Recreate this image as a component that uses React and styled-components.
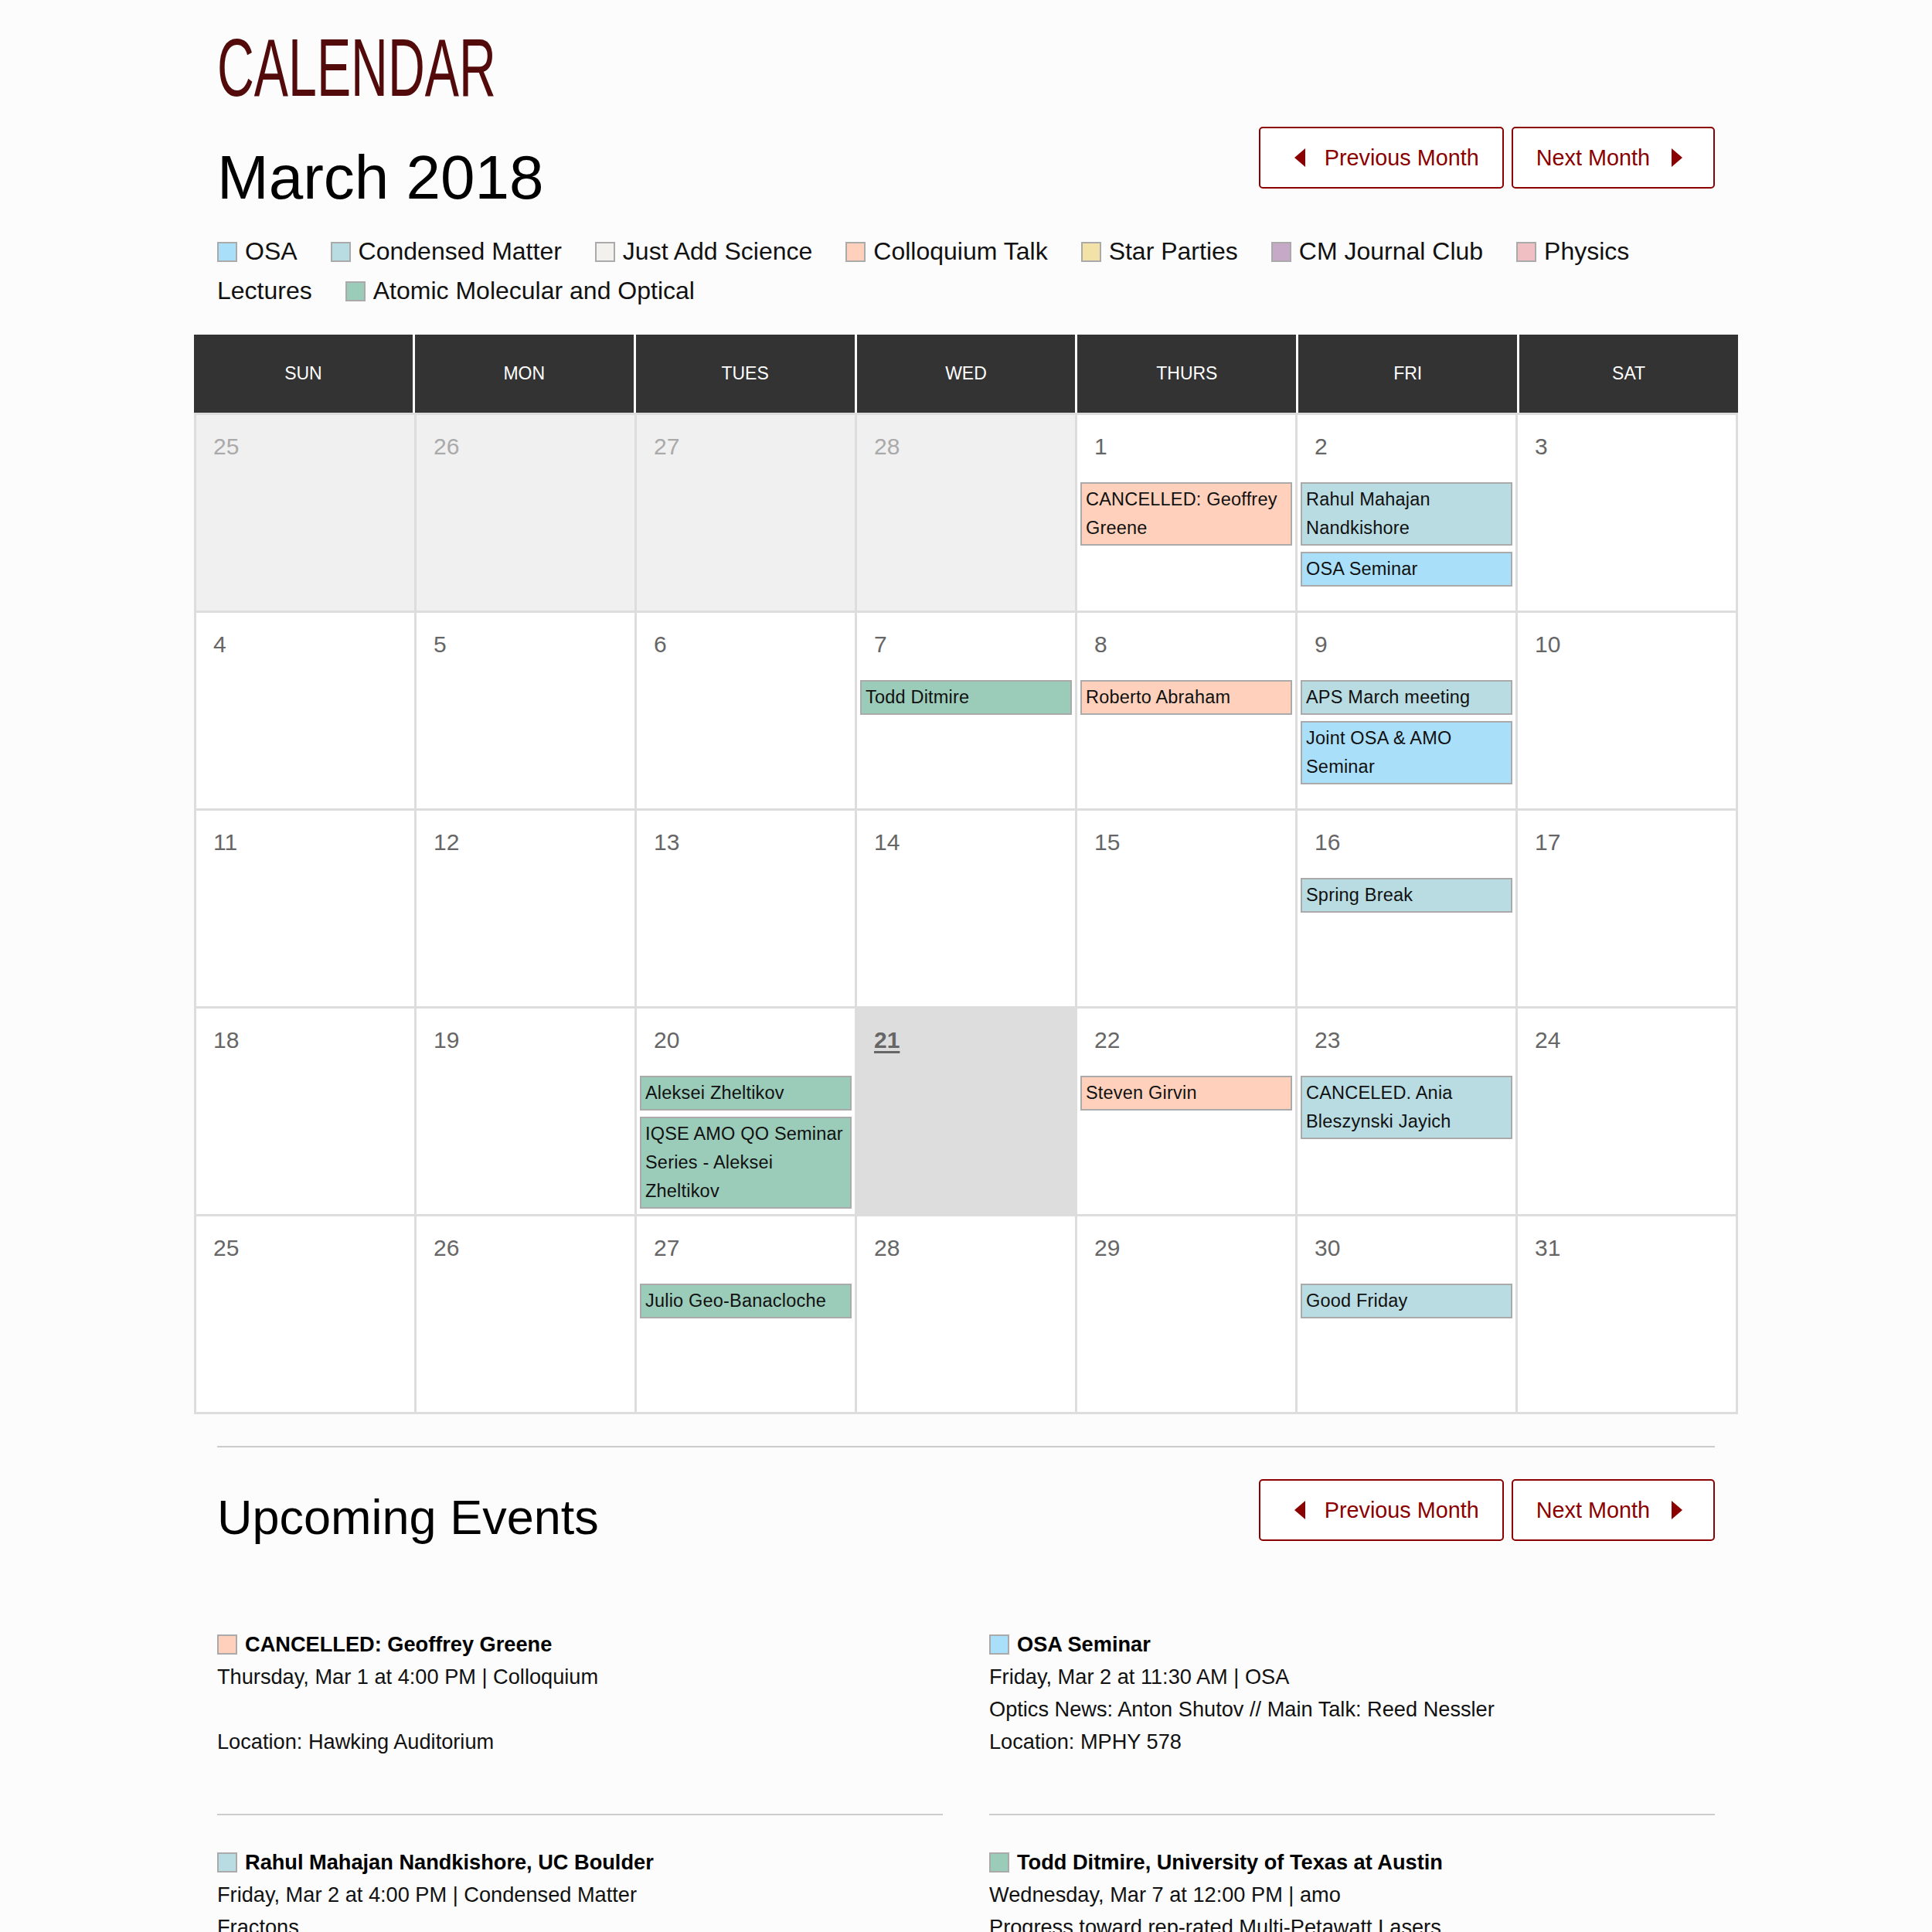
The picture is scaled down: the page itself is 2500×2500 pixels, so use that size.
import React from 'react';
import styled, { createGlobalStyle } from 'styled-components';

const GlobalStyle = createGlobalStyle`
  body {
    margin: 0;
    background: #fcfcfc;
    font-family: "Liberation Sans", Arial, Helvetica, sans-serif;
    color: #111;
  }
`;

const colors = {
  osa: '#aadffa',
  cm: '#b8dce2',
  jas: '#f3f1ee',
  colloq: '#ffd1bc',
  star: '#f3e2a7',
  cmjc: '#c6a9c7',
  phys: '#efbfc4',
  amo: '#9bcbb9',
};

const Page = styled.div`
  width: 1998px;
  margin: 0 auto;
  padding-top: 34px;
`;

const Inner = styled.div`
  padding: 0 30px;
`;

const PageTitle = styled.h1`
  display: inline-block;
  margin: 0;
  font-family: "Liberation Sans", Arial, sans-serif;
  font-weight: 400;
  font-size: 106px;
  line-height: 106px;
  color: #520a0a;
  transform: scaleX(0.625);
  transform-origin: left center;
`;

const HeadRow = styled.div`
  display: flex;
  justify-content: space-between;
  align-items: flex-start;
  margin-top: ${(p) => p.$top}px;
`;

const MonthTitle = styled.h2`
  margin: 22px 0 0;
  font-size: 80px;
  line-height: 88px;
  font-weight: 400;
  color: #000;
`;

const SectionTitle = styled.h2`
  margin: 14px 0 0;
  font-size: 63px;
  line-height: 70px;
  font-weight: 400;
  color: #000;
`;

const ButtonGroup = styled.div`
  display: flex;
  gap: 10px;
`;

const NavButton = styled.button`
  display: inline-flex;
  align-items: center;
  height: 80px;
  padding: 0 30px;
  border: 2px solid #8b0000;
  border-radius: 5px;
  background: #fff;
  color: #8b0000;
  font-family: inherit;
  font-size: 28.8px;
  cursor: pointer;
`;

const Caret = styled.svg`
  width: 14px;
  height: 24px;
  fill: #8b0000;
  margin: ${(p) => (p.$dir === 'left' ? '0 25px 0 14px' : '0 10px 0 28px')};
`;

const Legend = styled.div`
  margin-top: 26px;
  font-size: 32px;
  line-height: 51px;
  color: #111;
`;

const LegendItem = styled.span`
  margin-right: 43px;
`;

const Swatch = styled.span`
  display: inline-block;
  box-sizing: border-box;
  width: ${(p) => p.$size}px;
  height: ${(p) => p.$size}px;
  margin-right: 10px;
  border: 2px solid #aaa;
  background: ${(p) => p.$color};
  vertical-align: middle;
  position: relative;
  top: -2px;
`;

const DayHeader = styled.div`
  display: grid;
  grid-template-columns: repeat(7, 1fr);
  gap: 3px;
  margin-top: 31px;
`;

const DayName = styled.div`
  height: 101px;
  background: #333;
  color: #fff;
  font-size: 23px;
  display: flex;
  align-items: center;
  justify-content: center;
`;

const Grid = styled.div`
  display: grid;
  grid-template-columns: repeat(7, 1fr);
  gap: 3px;
  background: #ddd;
  border: 3px solid #ddd;
`;

const Cell = styled.div`
  box-sizing: border-box;
  min-height: 253px;
  padding: 19px 4px 7px;
  background: ${(p) => (p.$today ? '#ddd' : p.$other ? '#f0f0f0' : '#fff')};
`;

const DateNum = styled.div`
  padding-left: 18px;
  font-size: 30px;
  line-height: 44px;
  color: ${(p) => (p.$other ? '#aaa' : '#666')};
  font-weight: ${(p) => (p.$today ? 700 : 400)};
  text-decoration: ${(p) => (p.$today ? 'underline' : 'none')};
  text-underline-offset: 4px;
  text-decoration-thickness: 3px;
`;

const EventStack = styled.div`
  display: flex;
  flex-direction: column;
  gap: 8px;
  margin-top: 24px;
`;

const EventBox = styled.div`
  padding: 2px 5px;
  border: 2px solid #aaa;
  background: ${(p) => p.$color};
  font-size: 23.5px;
  letter-spacing: 0.2px;
  line-height: 37px;
  color: #111;
`;

const Divider = styled.div`
  margin-top: 41px;
  border-top: 2px solid #ccc;
`;

const EventList = styled.div`
  display: grid;
  grid-template-columns: 1fr 1fr;
  column-gap: 60px;
  margin-top: 69px;
`;

const ListItem = styled.div`
  padding: 40px 0 72px;
  border-bottom: 2px solid #ccc;
  font-size: 27.2px;
  line-height: 42px;
  color: #111;
`;

const ListTitle = styled.div`
  font-weight: 700;
  color: #000;
`;

const ListLine = styled.div`
  min-height: 42px;
`;

const legend = [
  ['OSA', colors.osa],
  ['Condensed Matter', colors.cm],
  ['Just Add Science', colors.jas],
  ['Colloquium Talk', colors.colloq],
  ['Star Parties', colors.star],
  ['CM Journal Club', colors.cmjc],
  ['Physics Lectures', colors.phys],
  ['Atomic Molecular and Optical', colors.amo],
];

const days = ['SUN', 'MON', 'TUES', 'WED', 'THURS', 'FRI', 'SAT'];

const events = {
  1: [['CANCELLED: Geoffrey Greene', colors.colloq]],
  2: [
    ['Rahul Mahajan Nandkishore', colors.cm],
    ['OSA Seminar', colors.osa],
  ],
  7: [['Todd Ditmire', colors.amo]],
  8: [['Roberto Abraham', colors.colloq]],
  9: [
    ['APS March meeting', colors.cm],
    ['Joint OSA & AMO Seminar', colors.osa],
  ],
  16: [['Spring Break', colors.cm]],
  20: [
    ['Aleksei Zheltikov', colors.amo],
    ['IQSE AMO QO Seminar Series - Aleksei Zheltikov', colors.amo],
  ],
  22: [['Steven Girvin', colors.colloq]],
  23: [['CANCELED. Ania Bleszynski Jayich', colors.cm]],
  27: [['Julio Geo-Banacloche', colors.amo]],
  30: [['Good Friday', colors.cm]],
};

const cells = [
  ...[25, 26, 27, 28].map((d) => ({ day: d, other: true })),
  ...Array.from({ length: 31 }, (_, i) => ({ day: i + 1, today: i + 1 === 21 })),
];

const upcoming = [
  {
    color: colors.colloq,
    title: 'CANCELLED: Geoffrey Greene',
    when: 'Thursday, Mar 1 at 4:00 PM | Colloquium',
    desc: '',
    where: 'Location: Hawking Auditorium',
  },
  {
    color: colors.osa,
    title: 'OSA Seminar',
    when: 'Friday, Mar 2 at 11:30 AM | OSA',
    desc: 'Optics News: Anton Shutov // Main Talk: Reed Nessler',
    where: 'Location: MPHY 578',
  },
  {
    color: colors.cm,
    title: 'Rahul Mahajan Nandkishore, UC Boulder',
    when: 'Friday, Mar 2 at 4:00 PM | Condensed Matter',
    desc: 'Fractons',
    where: 'Location: MPHY 205',
  },
  {
    color: colors.amo,
    title: 'Todd Ditmire, University of Texas at Austin',
    when: 'Wednesday, Mar 7 at 12:00 PM | amo',
    desc: 'Progress toward rep-rated Multi-Petawatt Lasers',
    where: 'Location: MPHY 203',
  },
];

function MonthButtons() {
  return (
    <ButtonGroup>
      <NavButton>
        <Caret $dir="left" viewBox="0 0 14 24">
          <polygon points="14,0 0,12 14,24" />
        </Caret>
        Previous Month
      </NavButton>
      <NavButton>
        Next Month
        <Caret $dir="right" viewBox="0 0 14 24">
          <polygon points="0,0 14,12 0,24" />
        </Caret>
      </NavButton>
    </ButtonGroup>
  );
}

export default function App() {
  return (
    <>
      <GlobalStyle />
      <Page>
        <Inner>
          <PageTitle>CALENDAR</PageTitle>
          <HeadRow $top={24}>
            <MonthTitle>March 2018</MonthTitle>
            <MonthButtons />
          </HeadRow>
          <Legend>
            {legend.map(([label, c]) => (
              <LegendItem key={label}>
                <Swatch $size={26} $color={c} />
                {label}
              </LegendItem>
            ))}
          </Legend>
        </Inner>

        <DayHeader>
          {days.map((d) => (
            <DayName key={d}>{d}</DayName>
          ))}
        </DayHeader>
        <Grid>
          {cells.map((c, i) => (
            <Cell key={i} $other={c.other} $today={c.today}>
              <DateNum $other={c.other} $today={c.today}>
                {c.day}
              </DateNum>
              {!c.other && events[c.day] && (
                <EventStack>
                  {events[c.day].map(([t, col]) => (
                    <EventBox key={t} $color={col}>
                      {t}
                    </EventBox>
                  ))}
                </EventStack>
              )}
            </Cell>
          ))}
        </Grid>

        <Inner>
          <Divider />
          <HeadRow $top={41}>
            <SectionTitle>Upcoming Events</SectionTitle>
            <MonthButtons />
          </HeadRow>
          <EventList>
            {upcoming.map((e) => (
              <ListItem key={e.title}>
                <ListTitle>
                  <Swatch $size={26} $color={e.color} />
                  {e.title}
                </ListTitle>
                <ListLine>{e.when}</ListLine>
                <ListLine>{e.desc}</ListLine>
                <ListLine>{e.where}</ListLine>
              </ListItem>
            ))}
          </EventList>
        </Inner>
      </Page>
    </>
  );
}
